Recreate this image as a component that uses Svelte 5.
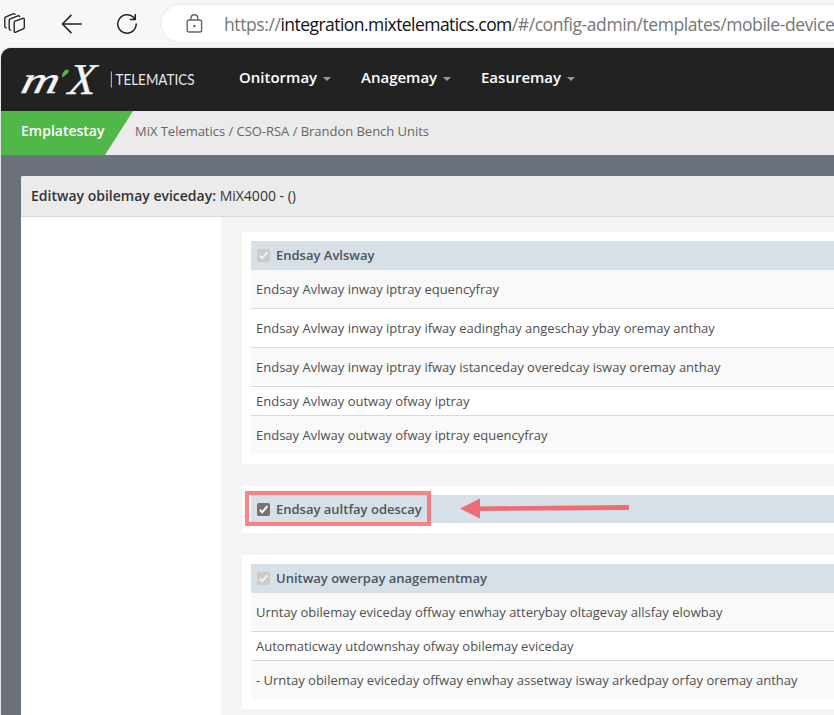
<script>
  const menus = [
    { label: 'Onitormay', width: 122 },
    { label: 'Anagemay', width: 120 },
    { label: 'Easuremay', width: 120 }
  ];
  const cards = [
    {
      title: 'Endsay Avlsway', locked: true,
      rows: [
        { text: 'Endsay Avlway inway iptray equencyfray' },
        { text: 'Endsay Avlway inway iptray ifway eadinghay angeschay ybay oremay anthay' },
        { text: 'Endsay Avlway inway iptray ifway istanceday overedcay isway oremay anthay' },
        { text: 'Endsay Avlway outway ofway iptray', compact: true },
        { text: 'Endsay Avlway outway ofway iptray equencyfray' }
      ]
    },
    { title: 'Endsay aultfay odescay', locked: false, rows: [], marked: true },
    {
      title: 'Unitway owerpay anagementmay', locked: true,
      rows: [
        { text: 'Urntay obilemay eviceday offway enwhay atterybay oltagevay allsfay elowbay' },
        { text: 'Automaticway utdownshay ofway obilemay eviceday', compact: true },
        { text: '- Urntay obilemay eviceday offway enwhay assetway isway arkedpay orfay oremay anthay' }
      ]
    }
  ];
</script>

<div class="window">
  <div class="toolbar">
    <svg class="tabs" width="24" height="24" viewBox="0 0 24 24" fill="none" stroke="#222" stroke-width="1.35" stroke-linejoin="round" stroke-linecap="round">
      <path d="M12.1 9.2 19.8 6.3Q21.3 5.8 21.3 7.4V15.2Q21.3 16.4 20.2 16.9L12.8 20.2Q11.2 20.8 11.2 19.2V10.6Q11.2 9.6 12.1 9.2Z" />
      <path d="M7.7 18.1Q6.2 18 6.2 16.8V8.2Q6.2 7.2 7.2 6.8L14.8 3.8Q16.1 3.4 16.6 4.6" />
      <path d="M3.2 15.9Q1.8 15.7 1.8 14.5V6.4Q1.8 5.3 2.8 4.9L10.2 1.8Q11.3 1.4 12 2.4" />
    </svg>
    <svg class="back" width="22" height="20" viewBox="0 0 22 20" fill="none" stroke="#222" stroke-width="1.5" stroke-linecap="round" stroke-linejoin="round">
      <path d="M20.3 10H1.4M10 1.4 1.4 10 10 18.6" />
    </svg>
    <svg class="reload" width="22" height="22" viewBox="0 0 22 22" fill="none" stroke="#222" stroke-width="1.5" stroke-linecap="round" stroke-linejoin="round">
      <path d="M20.2 11A9.2 9.2 0 1 1 18.2 5.3L19.3 6.5M19.3 1.6V6.5H14.4" />
    </svg>
    <div class="address">
      <svg width="18" height="20" viewBox="0 0 18 20" fill="none" stroke="#666" stroke-width="1.4">
        <rect x="1.2" y="6" width="14.4" height="12" rx="1.8" />
        <path d="M5 6V4.2a3.4 3.4 0 0 1 6.8 0V6" />
        <circle cx="8.4" cy="12" r="1.2" fill="#666" stroke="none" />
      </svg>
      <div class="url"><span class="scheme">https://</span><span class="host">integration.mixtelematics.com</span><span class="path">/#/config-admin/templates/mobile-device</span></div>
    </div>
  </div>

  <div class="page">
    <nav>
      <svg class="logo" width="218" height="62" viewBox="0 0 218 62">
        <text class="script" transform="translate(19.5 44) skewX(-14) scale(1.36 1)" font-size="38">m</text>
        <path d="M62.1 28.4C61.8 24.6 63.8 21.2 67.2 20.6Q69.6 20.6 68.4 23.2Q66.4 26.6 62.1 28.4Z" fill="#4fb848" />
        <text class="script" transform="translate(67.5 45) skewX(-5) scale(1.02 1)" font-size="44">X</text>
        <path d="M111.4 22.5V38.5" stroke="#aaa" stroke-width="1.2" />
        <text x="115.5" y="36.2" class="brand" textLength="79" lengthAdjust="spacingAndGlyphs">TELEMATICS</text>
      </svg>
      <div class="menus">
        {#each menus as menu}
          <div class="menu" style:width="{menu.width}px"><span>{menu.label}</span><i></i></div>
        {/each}
      </div>
    </nav>
    <div class="crumbs">
      <div class="section">Emplatestay</div>
      <div class="trail">MiX Telematics / CSO-RSA / Brandon Bench Units</div>
    </div>
    <main>
      <header><b>Editway obilemay eviceday:</b>&nbsp;MiX4000 - ()</header>
      <div class="body">
        <aside></aside>
        <div class="cards">
          {#each cards as card}
            <section class:single={card.marked}>
              <div class="title">
                <svg class="check" class:locked={card.locked} width="13" height="13" viewBox="0 0 13 13">
                  <rect width="13" height="13" rx="1.8" />
                  <path d="M2.8 6.8 5.2 9.3 10.3 3.2" />
                </svg>
                <span>{card.title}</span>
              </div>
              {#each card.rows as row}
                <div class="row" class:compact={row.compact}>{row.text}</div>
              {/each}
              {#if card.marked}
                <div class="highlight"></div>
                <svg class="arrow" width="170" height="22" viewBox="0 0 170 22">
                  <path d="M0 10.6 20 .5V8.4L169 7V12L20 12.9V20.4Z" fill="#ee6d72" />
                </svg>
              {/if}
            </section>
          {/each}
        </div>
      </div>
    </main>
  </div>
</div>

<style>
  :global(body) { margin: 0; overflow: hidden; }
  * { box-sizing: border-box; }
  .window { width: 834px; height: 715px; overflow: hidden; background: #f7f7f7; font-family: "Open Sans", sans-serif; font-size: 13px; color: #505050; white-space: nowrap; }
  .toolbar { height: 48px; display: flex; align-items: center; overflow: hidden; }
  .toolbar > svg { flex: none; }
  .tabs { margin-left: 3px; }
  .back { margin-left: 34px; margin-top: -1px; }
  .reload { margin-left: 33px; }
  .address { margin-left: 24px; margin-top: -1px; width: 760px; height: 37px; flex: none; border-radius: 19px; background: #fff; box-shadow: 0 0 4px #e4e4e4; display: flex; align-items: center; padding-left: 24px; }
  .url { margin-left: 20px; display: flex; font-size: 17.5px; line-height: 24px; color: #767676; }
  .scheme { letter-spacing: -.4px; }
  .host { color: #111; letter-spacing: -.55px; }
  .path { letter-spacing: -.42px; }
  .page { margin-left: 1px; width: 833px; height: 667px; border-top-left-radius: 10px; background: #6a717b; overflow: hidden; box-shadow: 0 0 1px #555; }
  nav { height: 63px; background: #222; display: flex; align-items: center; }
  .logo { flex: none; margin-left: -1px; }
  .script { font-family: "Liberation Serif", serif; font-style: italic; fill: #f4f4f4; stroke: #f4f4f4; stroke-width: .4; }
  .brand { font-family: Lato, sans-serif; font-size: 15px; fill: #e8e8e8; }
  .menus { display: flex; margin-left: 21px; margin-top: -5px; }
  .menu { display: flex; align-items: center; color: #fff; font-weight: 600; font-size: 15px; }
  .menu i { border: 4px solid transparent; border-top-color: #999; border-bottom: 0; margin: 3px 0 0 6px; }
  .crumbs { height: 44px; display: flex; background: #ebebeb; line-height: 41px; }
  .section { width: 132px; padding-left: 20px; background: #50b848; color: #fff; font-size: 14px; font-weight: 600; line-height: 39px; clip-path: polygon(0 0, 100% 0, 104px 100%, 0 100%); }
  .trail { margin-left: 2px; color: #666; letter-spacing: -.03px; }
  main { margin: 21px 0 0 20px; background: #f4f4f4; border-top-left-radius: 2px; overflow: hidden; }
  header { height: 41px; border-bottom: 1px solid #d9d9d9; background: #ebebeb; padding-left: 10px; font-size: 14px; line-height: 40px; color: #333; display: flex; }
  header b { font-weight: 600; }
  .body { display: flex; height: 498px; }
  aside { width: 200px; flex: none; background: #fff; }
  .cards { flex: 1; padding: 15px 0 0 21px; display: flex; flex-direction: column; gap: 22px; }
  section { position: relative; flex: none; background: #fff; padding: 9px 0 10px 9px; }
  .title { height: 29px; background: #d7e0e6; display: flex; align-items: center; padding-left: 6px; font-weight: 600; color: #4b5560; }
  .title span { margin-left: 6px; line-height: 18px; padding-bottom: 1px; }
  .single { height: 47px; }
  .single .title { height: 28px; }
  .single .title span { padding-bottom: 0; }
  .check { fill: #757575; flex: none; }
  .check path { fill: none; stroke: #fff; stroke-width: 2; }
  .check.locked { fill: #c9cbcc; }
  .check.locked path { stroke: #eef0f1; }
  .row { height: 39px; line-height: 38px; padding-left: 5px; border-bottom: 1px solid #d9d9d9; background: #fff; }
  .row.compact { height: 29px; line-height: 28px; }
  .row:nth-child(even) { background: #f9f9f9; }
  .row:last-child { border-bottom: 0; height: 38px; }
  .highlight { position: absolute; left: 3px; top: 5px; width: 186px; height: 35px; border: 4px solid rgba(255, 90, 90, .75); }
  .arrow { position: absolute; left: 218px; top: 12px; }
</style>
